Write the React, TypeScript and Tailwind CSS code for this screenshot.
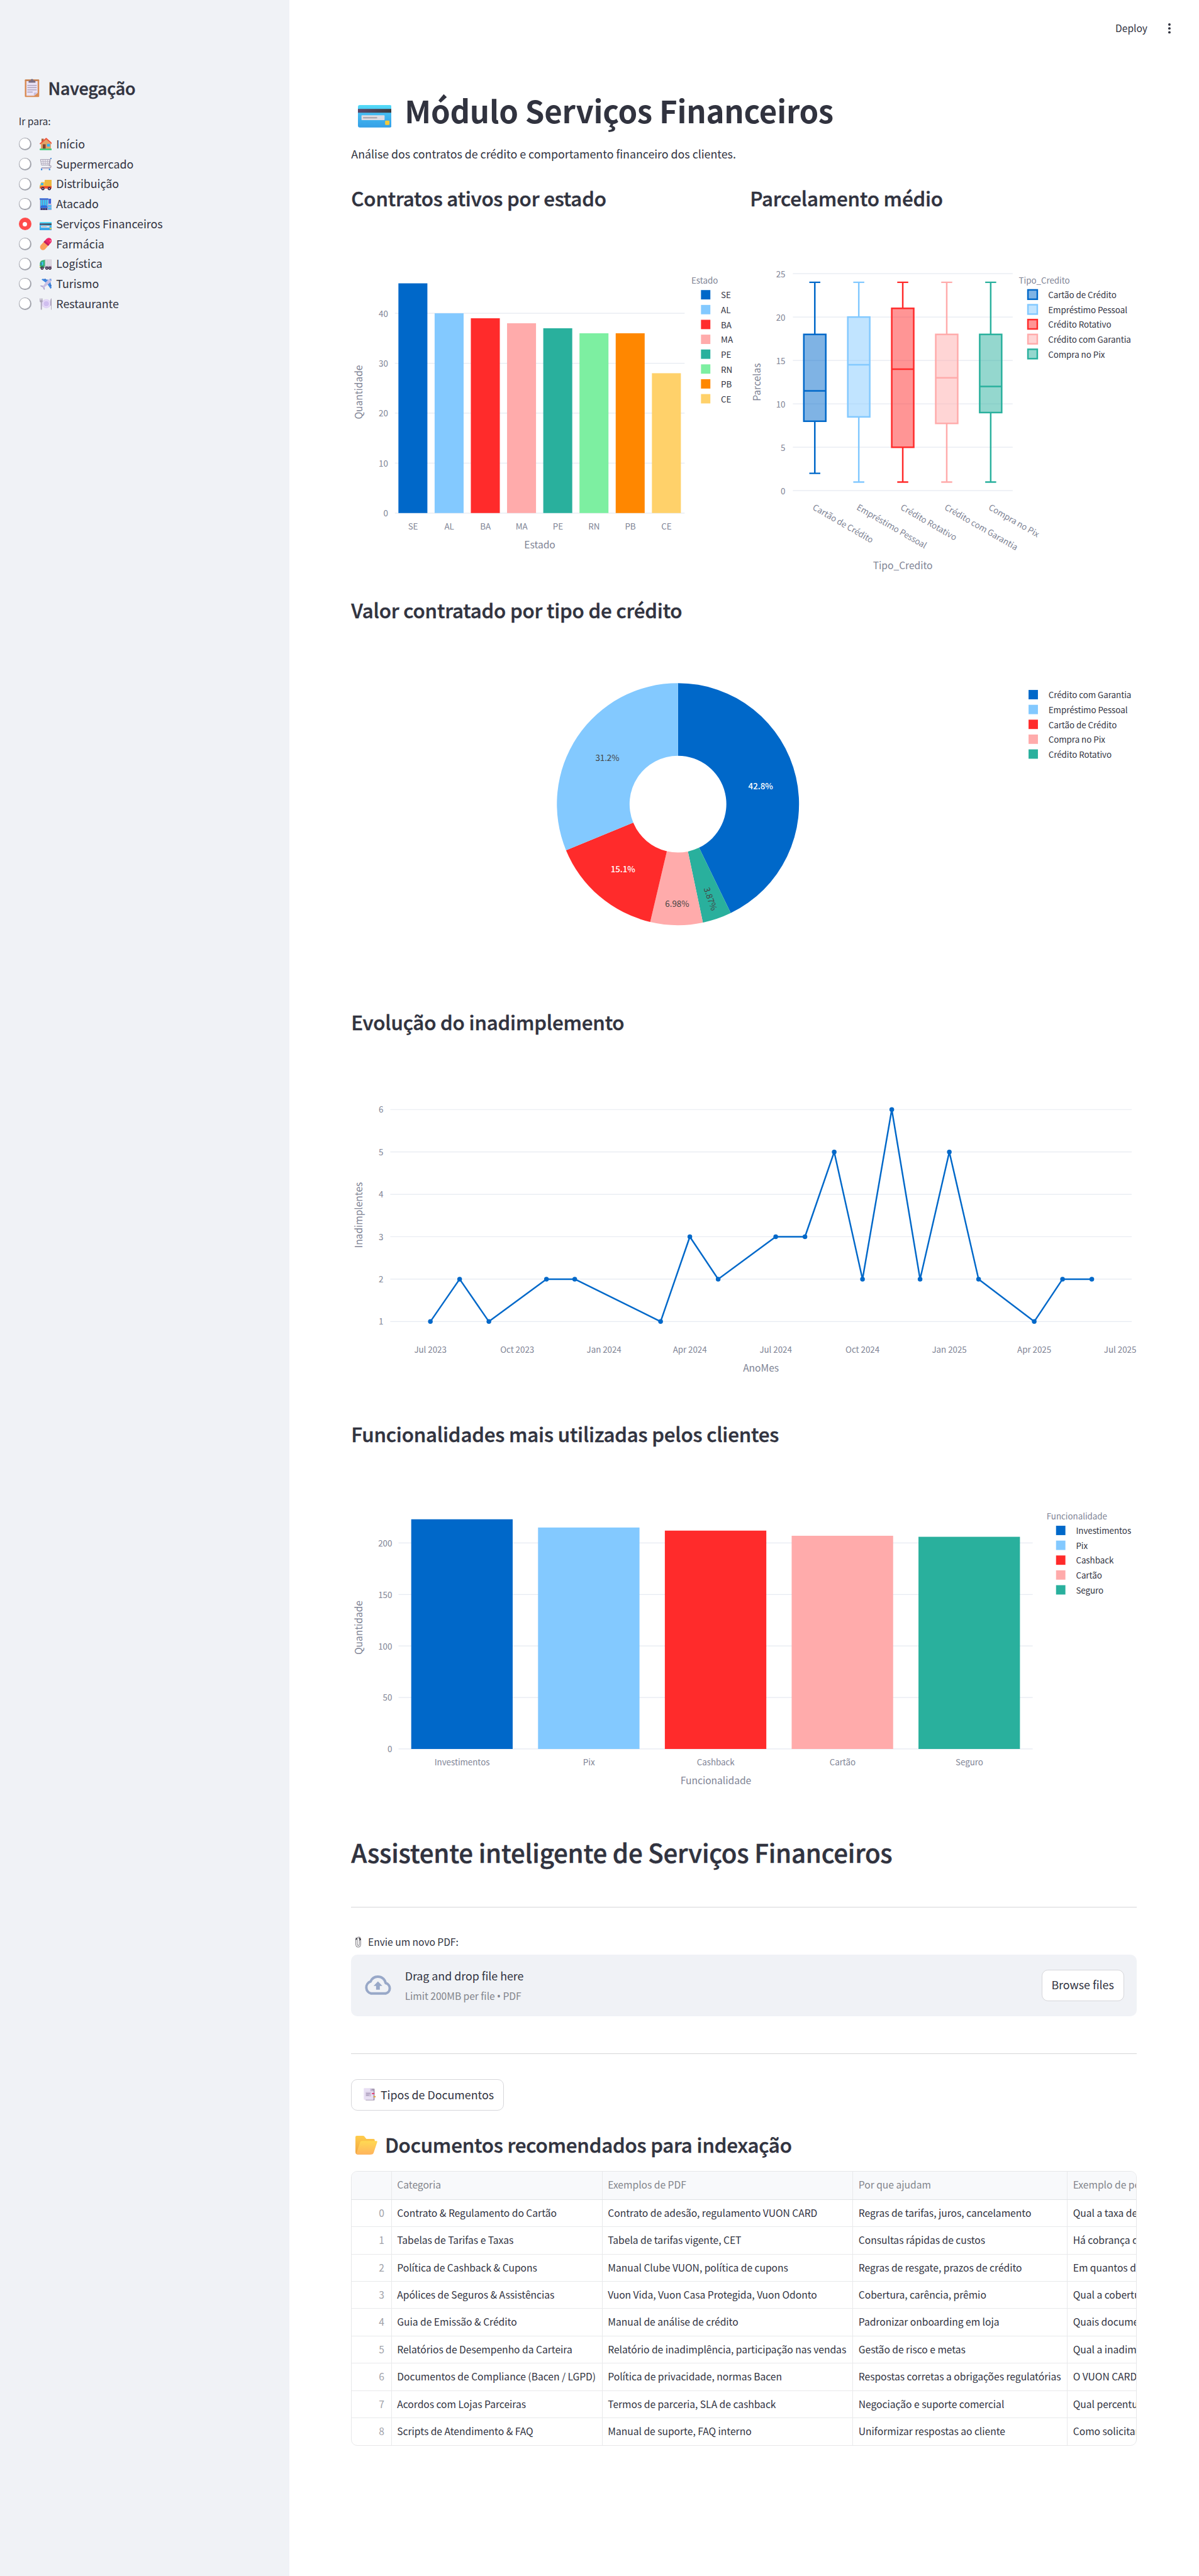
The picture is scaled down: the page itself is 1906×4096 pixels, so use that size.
import React from "react";

const C = {
  blue: "#0068c9",
  sky: "#83c9ff",
  red: "#ff2b2b",
  pink: "#ffabab",
  teal: "#29b09d",
  green: "#7defa1",
  orange: "#ff8700",
  yellow: "#ffd16a",
};

type IconProps = { className?: string };

/* ---------- Pictograms ---------- */

const Clipboard = ({ className }: IconProps) => (
  <svg viewBox="0 0 24 30" className={className}>
    <rect x="0.5" y="1.5" width="23" height="28" rx="1.2" fill="#d98c55" />
    <rect x="0.5" y="1.5" width="23" height="2" rx="1" fill="#c4804f" />
    <path d="M3 4h18v19l-5.500 4.500H3z" fill="#e9e2f5" />
    <path d="M21 22.500l-6 5v-3.500q0-1.500 1.500-1.500z" fill="#c9bcdc" />
    <path d="M6.500 6.500v-2q0-1.500 2-1.500h1.200q.3-2.500 2.300-2.500t2.300 2.500h1.200q2 0 2 1.500v2z" fill="#7b6f82" />
    <path d="M4.500 11h15M4.500 14.500h15M4.500 18h15M4.500 21.500h8.500" stroke="#a69bb5" strokeWidth="1.200" />
  </svg>
);

const House = ({ className }: IconProps) => (
  <svg viewBox="0 0 20 20" className={className}>
    <rect x="3" y="1.500" width="3.600" height="7" fill="#a9683f" />
    <path d="M2 9.500L10.500 2 18 9.500V18H2z" fill="#e3a468" />
    <path d="M1 9.500L10.500 1.300 19.500 9.500" fill="none" stroke="#f2553c" strokeWidth="1.900" strokeLinecap="round" strokeLinejoin="round" />
    <rect x="5" y="10.500" width="4.600" height="7.500" fill="#7d4633" />
    <rect x="11.800" y="9.800" width="4.800" height="4.300" fill="#2fb5ff" />
    <rect x="0" y="17.500" width="20" height="2.300" rx="1" fill="#3ecb77" />
  </svg>
);

const Cart = ({ className }: IconProps) => (
  <svg viewBox="0 0 20 20" className={className}>
    <path d="M1.300 2.500h15l-1.500 9.300H3z" fill="#eeecf3" stroke="#a7a2b3" strokeWidth="1" />
    <path d="M1.800 5.500h14M2.300 8.700h13M5.200 2.500l.8 9M9 2.500v9M12.800 2.500l-.6 9" stroke="#b3aebf" strokeWidth="0.900" />
    <path d="M19.500 1h-2l-2.200 12.500M15.500 12.200q2.800 0 2.800 1.700t-2.300 1.800H3" fill="none" stroke="#a49db3" strokeWidth="1.200" />
    <path d="M17.200 1h2.800" stroke="#3b8be0" strokeWidth="1.500" />
    <path d="M2 17.200h15" stroke="#bdb4cd" strokeWidth="1.200" />
    <rect x="2" y="17.200" width="2.200" height="2.600" fill="#3b8be0" />
    <rect x="14.800" y="17.200" width="2.200" height="2.600" fill="#3b8be0" />
  </svg>
);

const Truck = ({ className }: IconProps) => (
  <svg viewBox="0 0 20 20" className={className}>
    <rect x="8" y="3" width="11.800" height="11" rx="1.200" fill="#edb83f" />
    <path d="M0.300 12l1.600-4.300q.5-1.200 1.700-1.200H8V16H0.300z" fill="#ffc043" />
    <path d="M1.400 11.200l1.300-3.300H6v3.800H1.400z" fill="#35b6f5" />
    <path d="M0.300 13h19.500v4H0.300z" fill="#f2502f" />
    <rect x="0.200" y="12.200" width="1.600" height="2" fill="#a5e23b" />
    <circle cx="5.200" cy="17" r="2.600" fill="#3b2848" />
    <circle cx="5.200" cy="17" r="1" fill="#cfc6dc" />
    <circle cx="15.500" cy="17" r="2.600" fill="#3b2848" />
    <circle cx="15.500" cy="17" r="1" fill="#cfc6dc" />
  </svg>
);

const Store = ({ className }: IconProps) => (
  <svg viewBox="0 0 20 20" className={className}>
    <rect x="0.700" y="1" width="13" height="19" fill="#7a80b8" />
    <rect x="0" y="0.300" width="14" height="2.200" fill="#3668d6" />
    <path d="M2.700 3v9M6 3v9M9 3v9M12 3v9" stroke="#35cdfb" strokeWidth="2" />
    <rect x="14.300" y="1" width="4" height="8" fill="#3d5fd8" />
    <rect x="12.500" y="9.800" width="7.200" height="10" fill="#b5a9d6" />
    <rect x="13.300" y="11.500" width="5.600" height="2.500" fill="#43c4f7" />
    <rect x="13.300" y="15.500" width="5.600" height="2.500" fill="#43c4f7" />
    <path d="M1 15.500q1-4 3-4h6q2 0 2.700 4z" fill="#2a6fe0" />
    <path d="M3.500 16v4M7 16v4M10.500 16v4" stroke="#352b58" strokeWidth="2.300" />
  </svg>
);

const Card = ({ className }: IconProps) => (
  <svg viewBox="0 0 54 36" className={className}>
    <defs>
      <linearGradient id="cardBody" x1="0" y1="0" x2="0" y2="1">
        <stop offset="0" stopColor="#55dcf7" />
        <stop offset="0.350" stopColor="#45bdf2" />
        <stop offset="1" stopColor="#359fe6" />
      </linearGradient>
      <linearGradient id="cardStripe" x1="0" y1="0" x2="1" y2="0">
        <stop offset="0" stopColor="#5b4769" />
        <stop offset="1" stopColor="#3b3b3d" />
      </linearGradient>
    </defs>
    <rect width="54" height="36" rx="3" fill="url(#cardBody)" />
    <rect y="6.300" width="54" height="6" fill="url(#cardStripe)" />
    <rect x="5.700" y="16.300" width="37" height="8" rx="1.200" fill="#dedce2" />
    <rect x="8" y="19.500" width="23" height="2" rx="1" fill="#a5a1a8" />
    <rect x="43.500" y="25" width="7" height="7" rx="1.500" fill="#f4c93c" />
  </svg>
);

const Pill = ({ className }: IconProps) => (
  <svg viewBox="0 0 20 20" className={className}>
    <g transform="rotate(-48 10 10)">
      <path d="M10 5.200H3.200a4.800 4.800 0 0 0 0 9.600H10z" fill="#fca05c" />
      <path d="M10 5.200h6.800a4.800 4.800 0 0 1 0 9.600H10z" fill="#ed2866" />
      <path d="M10 5.200h3v9.600h-3z" fill="#c11f5c" />
    </g>
    <circle cx="17" cy="5" r="1" fill="#ff9ec2" />
  </svg>
);

const Lorry = ({ className }: IconProps) => (
  <svg viewBox="0 0 20 20" className={className}>
    <rect x="8" y="2.500" width="12" height="12.500" fill="#d5ced9" />
    <path d="M10.500 3v11.500M13.500 3v11.500M16.500 3v11.500" stroke="#efebf2" strokeWidth="1" />
    <path d="M0.300 16V9q.7-5 4.700-5.300L8.500 3v13z" fill="#37b277" />
    <path d="M1.200 11.500q0-5 3.300-5.300h1.200v5.300z" fill="#3cc5f0" />
    <path d="M2.300 7.500v4" stroke="#2c4d58" strokeWidth="1.200" />
    <rect x="0.300" y="13" width="19.500" height="3" fill="#b4a9bf" />
    <rect x="0.300" y="12.500" width="7" height="3.500" fill="#2f9e69" />
    <rect x="0" y="13" width="1.300" height="2" fill="#ffd447" />
    <rect x="18.800" y="13" width="1.200" height="2.400" fill="#e43b6b" />
    {[4, 11.5, 16.5].map((x) => (
      <g key={x}>
        <circle cx={x} cy="16.600" r="2.500" fill="#35223f" />
        <circle cx={x} cy="16.600" r="0.900" fill="#d6cbe2" />
      </g>
    ))}
  </svg>
);

const Plane = ({ className }: IconProps) => (
  <svg viewBox="0 0 20 20" className={className}>
    <path d="M3 2.500l2-1.300L14.500 3 10 7.500z" fill="#3f86e0" />
    <path d="M17.300 6l1.800 9.500-1.500 2L12.500 10z" fill="#3f86e0" />
    <path d="M0.500 12.500l1.700-.7 4 .8 1.300 1.200.8 4.200-1 1.500-2.300-4.500z" fill="#b1a7d0" />
    <path d="M4.500 14.500Q12 3.500 15.500 1.600q3-1.800 4 0 .6 1.800-1.200 4Q14.500 10 6 16z" fill="#c9bfe2" />
    <path d="M16.500 1.700q1.300.8 2 2.200" stroke="#4a9cf0" strokeWidth="1.200" fill="none" />
    <rect x="8" y="1" width="1.500" height="2" fill="#2f65bb" />
    <rect x="17" y="11" width="2" height="1.500" fill="#2f65bb" />
  </svg>
);

const Plate = ({ className }: IconProps) => (
  <svg viewBox="0 0 20 20" className={className}>
    <circle cx="10.700" cy="10" r="7.300" fill="#e0d2f5" />
    <circle cx="10.700" cy="10" r="4.800" fill="#d0beef" stroke="#eee5fb" strokeWidth="0.900" />
    <path d="M0.200 1.500h1v3h.8v-3h1v3h.8v-3h1v4.700q0 1.300-1.200 1.600V19q0 .8-.9.800t-.9-.8V7.800Q.2 7.500.2 6.200z" fill="#aaa2b7" />
    <path d="M17.200 5q.2-3 1.800-3.700h.9V19q0 .8-.8.800t-.8-.8v-6h-1.100z" fill="#aaa2b7" />
  </svg>
);

const Clips = ({ className }: IconProps) => (
  <svg viewBox="0 0 12 18" className={className} fill="none" stroke="#8c8a90">
    <path d="M1.500 6v6q0 5 4 5t4-5V5q0-4-3-4T4 4.500V12q0 2.500 1.700 2.500T7.300 12V6" strokeWidth="1.100" />
    <path d="M1.200 5.500l2-1.500M1.500 3h2.200M6.500 2.500l3 2.500M7.200 5.800l2-.8" stroke="#37343c" strokeWidth="1.600" />
  </svg>
);

const Docs = ({ className }: IconProps) => (
  <svg viewBox="0 0 20 20" className={className}>
    <rect x="3" y="1" width="14.700" height="19" rx="1" fill="#a79bb3" />
    <path d="M0.300 0.800q0-.5.500-.5H11l4.700 5V18q0 .8-.8.800H1.100q-.8 0-.8-.8z" fill="#e8dff3" />
    <path d="M10.800.3v4q0 1 1 1h3.900z" fill="#c4b6d4" />
    <rect x="3.300" y="6.500" width="8.700" height="7" fill="#cfc3dc" />
    <path d="M4 9h6.500M4 11.500h4.500" stroke="#9f93b1" strokeWidth="1" />
    <rect x="13.300" y="8" width="4" height="2" fill="#e23a72" />
    <rect x="15.800" y="13" width="3.500" height="2" fill="#e2a53c" />
  </svg>
);

const Folder = ({ className }: IconProps) => (
  <svg viewBox="0 0 35 30" className={className}>
    <defs>
      <linearGradient id="folderBack" x1="0" y1="0" x2="0" y2="1">
        <stop offset="0" stopColor="#ffcd4d" />
        <stop offset="1" stopColor="#f0a23f" />
      </linearGradient>
      <linearGradient id="folderFront" x1="0" y1="0" x2="0" y2="1">
        <stop offset="0" stopColor="#ffd953" />
        <stop offset="1" stopColor="#ffb45d" />
      </linearGradient>
    </defs>
    <path d="M0 2q0-2 2-2h10q1.500 0 2.500 1.300L17.500 5H29q2 0 2 2v10L24 30H4q-4 0-4-4z" fill="url(#folderBack)" />
    <path d="M10 8.300h23.500q2 0 1.300 2L29.300 27q-.9 3-4 3H4q-3 0-2-3L7.500 10.300q.7-2 2.500-2z" fill="url(#folderFront)" />
  </svg>
);

const CloudUpload = ({ className }: IconProps) => (
  <svg viewBox="0 0 46 31" className={className}>
    <path
      d="M12 29a10 10 0 0 1-.8-19.200C13.200 5 17.600 2 22.800 2c6.300 0 11.300 4.200 12.500 10.300A8.600 8.600 0 0 1 35.400 29z"
      fill="none"
      stroke="#98a8c8"
      strokeWidth="4"
      strokeLinejoin="round"
    />
    <path d="M23 9.500l7 7.500h-4v6h-6v-6h-4z" fill="#98a8c8" />
  </svg>
);

/* ---------- Chart helpers ---------- */

const Grid = ({ x1, x2, ys }: { x1: number; x2: number; ys: number[] }) => (
  <g stroke="#e6eaf1" strokeWidth="1.250">
    {ys.map((y) => (
      <line key={y} x1={x1} x2={x2} y1={y} y2={y} />
    ))}
  </g>
);

type LabelProps = {
  x: number;
  y: number;
  anchor?: "start" | "middle" | "end";
  rotate?: number;
  className?: string;
  children: React.ReactNode;
};

const Label = ({ x, y, anchor = "start", rotate, className = "fill-[#808495] text-[13.5px]", children }: LabelProps) => (
  <text x={x} y={y} textAnchor={anchor} className={className} transform={rotate ? `rotate(${rotate} ${x} ${y})` : undefined}>
    {children}
  </text>
);

const axisTitle = "fill-[#808495] text-[15.75px]";
const legendText = "fill-[#31333f] text-[13.5px]";

type LegendProps = {
  title?: string;
  titleX?: number;
  titleY?: number;
  x: number;
  y: number;
  textX: number;
  items: [string, string][];
  outlined?: boolean;
};

const Legend = ({ title, titleX = 0, titleY = 0, x, y, textX, items, outlined }: LegendProps) => (
  <g>
    {title && (
      <Label x={titleX} y={titleY}>
        {title}
      </Label>
    )}
    {items.map(([name, color], i) => (
      <g key={name}>
        <rect
          x={x}
          y={y + i * 23.8}
          width="15"
          height="15"
          fill={color}
          fillOpacity={outlined ? 0.5 : 1}
          stroke={outlined ? color : "none"}
          strokeWidth="2.500"
        />
        <Label x={textX} y={y + 13.3 + i * 23.8} className={legendText}>
          {name}
        </Label>
      </g>
    ))}
  </g>
);

/* ---------- Charts ---------- */

const states: [string, number, string][] = [
  ["SE", 46, C.blue],
  ["AL", 40, C.sky],
  ["BA", 39, C.red],
  ["MA", 38, C.pink],
  ["PE", 37, C.teal],
  ["RN", 36, C.green],
  ["PB", 36, C.orange],
  ["CE", 28, C.yellow],
];

const StatesChart = () => (
  <svg viewBox="562.5 360 618.75 562.5" className="h-[562.5px] w-[618.75px] overflow-visible">
    <Grid x1={632.8} x2={1096.8} ys={[0, 10, 20, 30, 40].map((v) => 822.2 - v * 8)} />
    {[0, 10, 20, 30, 40].map((v) => (
      <Label key={v} x={621.8} y={827.7 - v * 8} anchor="end">
        {v}
      </Label>
    ))}
    {states.map(([name, v, color], i) => (
      <g key={name}>
        <rect x={638.4 + i * 58} y={822.2 - v * 8} width="46.400" height={v * 8} fill={color} />
        <Label x={661.8 + i * 58} y={849} anchor="middle">
          {name}
        </Label>
      </g>
    ))}
    <Label x={864.8} y={878.6} anchor="middle" className={axisTitle}>
      Estado
    </Label>
    <Label x={580.4} y={628.5} anchor="middle" rotate={-90} className={axisTitle}>
      Quantidade
    </Label>
    <Legend title="Estado" titleX={1107.5} titleY={455} x={1123} y={465} textX={1155} items={states.map(([n, , c]) => [n, c])} />
  </svg>
);

const boxes: [string, string, number[]][] = [
  ["Cartão de Crédito", C.blue, [2, 8, 11.5, 18, 24]],
  ["Empréstimo Pessoal", C.sky, [1, 8.5, 14.5, 20, 24]],
  ["Crédito Rotativo", C.red, [1, 5, 14, 21, 24]],
  ["Crédito com Garantia", C.pink, [1, 7.75, 13, 18, 24]],
  ["Compra no Pix", C.teal, [1, 9, 12, 18, 24]],
];

const BoxChart = () => {
  const y = (v: number) => 786.4 - v * 13.91;
  return (
    <svg viewBox="1201.25 360 618.75 562.5" className="h-[562.5px] w-[618.75px] overflow-visible">
      <Grid x1={1270.1} x2={1622.2} ys={[0, 5, 10, 15, 20, 25].map(y)} />
      {[0, 5, 10, 15, 20, 25].map((v) => (
        <Label key={v} x={1258.2} y={y(v) + 5.5} anchor="end">
          {v}
        </Label>
      ))}
      {boxes.map(([name, color, [lo, q1, med, q3, hi]], i) => {
        const cx = 1305.3 + i * 70.42;
        return (
          <g key={name}>
            <g stroke={color} strokeWidth="2.500">
              <rect x={cx - 17.6} y={y(q3)} width="35.200" height={y(q1) - y(q3)} fill={color} fillOpacity="0.500" />
              <path
                d={`M${cx - 17.6} ${y(med)}h35.2M${cx} ${y(q3)}V${y(hi)}M${cx} ${y(q1)}V${y(lo)}M${cx - 8.8} ${y(hi)}h17.6M${cx - 8.8} ${y(lo)}h17.6`}
                fill="none"
              />
            </g>
            <Label x={cx - 4.5} y={816} rotate={30}>
              {name}
            </Label>
          </g>
        );
      })}
      <Label x={1446.2} y={912.4} anchor="middle" className={axisTitle}>
        Tipo_Credito
      </Label>
      <Label x={1218.2} y={612.5} anchor="middle" rotate={-90} className={axisTitle}>
        Parcelas
      </Label>
      <Legend
        title="Tipo_Credito"
        titleX={1632}
        titleY={455}
        x={1646.6}
        y={464.7}
        textX={1679}
        outlined
        items={boxes.map(([n, c]) => [n, c])}
      />
    </svg>
  );
};

const slices: [number, string][] = [
  [42.82, C.blue],
  [3.88, C.teal],
  [6.98, C.pink],
  [15.1, C.red],
  [31.22, C.sky],
];

const DonutChart = () => {
  const cx = 1086.1;
  const cy = 1288.6;
  const R = 193.9;
  const r = 77.5;
  const pt = (rad: number, f: number) =>
    `${cx + rad * Math.sin(f * 2 * Math.PI)} ${cy - rad * Math.cos(f * 2 * Math.PI)}`;
  let start = 0;
  return (
    <svg viewBox="562.5 1020 1257.5 562.5" className="h-[562.5px] w-full overflow-visible">
      {slices.map(([pct, color]) => {
        const a = start;
        const b = start + pct / 100;
        start = b;
        return (
          <path
            key={color}
            fill={color}
            d={`M${pt(R, a)}A${R} ${R} 0 0 1 ${pt(R, b)}L${pt(r, b)}A${r} ${r} 0 0 0 ${pt(r, a)}z`}
          />
        );
      })}
      <Label x={1218.6} y={1264.5} anchor="middle" className="fill-white text-[13.5px] font-medium">
        42.8%
      </Label>
      <Label x={998} y={1398} anchor="middle" className="fill-white text-[13.5px] font-medium">
        15.1%
      </Label>
      <Label x={973} y={1219.4} anchor="middle" className="fill-[#444444] text-[13.5px]">
        31.2%
      </Label>
      <Label x={1084.8} y={1453.2} anchor="middle" className="fill-[#444444] text-[13.5px]">
        6.98%
      </Label>
      <Label x={1133.4} y={1442} anchor="middle" rotate={71} className="fill-[#444444] text-[13.5px]">
        3.87%
      </Label>
      <Legend
        x={1647.6}
        y={1105.7}
        textX={1679.5}
        items={[
          ["Crédito com Garantia", C.blue],
          ["Empréstimo Pessoal", C.sky],
          ["Cartão de Crédito", C.red],
          ["Compra no Pix", C.pink],
          ["Crédito Rotativo", C.teal],
        ]}
      />
    </svg>
  );
};

/* [days since 1 Jul 2023, customers in default] */
const defaults: [number, number][] = [
  [0, 1], [31, 2], [62, 1], [123, 2], [153, 2], [244, 1], [275, 3], [305, 2], [366, 3], [397, 3],
  [428, 5], [458, 2], [489, 6], [519, 2], [550, 5], [581, 2], [640, 1], [670, 2], [701, 2],
];

const quarters: [number, string][] = [
  [0, "Jul 2023"], [92, "Oct 2023"], [184, "Jan 2024"], [275, "Apr 2024"], [366, "Jul 2024"],
  [458, "Oct 2024"], [550, "Jan 2025"], [640, "Apr 2025"], [731, "Jul 2025"],
];

const DefaultsChart = () => {
  const x = (d: number) => 689.6 + d * 1.5111;
  const y = (v: number) => 2185.5 - v * 67.92;
  return (
    <svg viewBox="562.5 1680 1257.5 562.5" className="h-[562.5px] w-full overflow-visible">
      <Grid x1={625.4} x2={1812.7} ys={[1, 2, 3, 4, 5, 6].map(y)} />
      {[1, 2, 3, 4, 5, 6].map((v) => (
        <Label key={v} x={614.3} y={y(v) + 5.2} anchor="end">
          {v}
        </Label>
      ))}
      {quarters.map(([d, name]) => (
        <Label key={name} x={x(d)} y={2167.8} anchor="middle">
          {name}
        </Label>
      ))}
      <polyline
        points={defaults.map(([d, v]) => `${x(d)},${y(v)}`).join(" ")}
        fill="none"
        stroke={C.blue}
        strokeWidth="2.500"
        strokeLinejoin="round"
      />
      {defaults.map(([d, v]) => (
        <circle key={d} cx={x(d)} cy={y(v)} r="3.750" fill={C.blue} />
      ))}
      <Label x={1219} y={2198} anchor="middle" className={axisTitle}>
        AnoMes
      </Label>
      <Label x={580.4} y={1947} anchor="middle" rotate={-90} className={axisTitle}>
        Inadimplentes
      </Label>
    </svg>
  );
};

const features: [string, number, string][] = [
  ["Investimentos", 223, C.blue],
  ["Pix", 215, C.sky],
  ["Cashback", 212, C.red],
  ["Cartão", 207, C.pink],
  ["Seguro", 206, C.teal],
];

const FeaturesChart = () => {
  const y = (v: number) => 2801.4 - v * 1.65;
  return (
    <svg viewBox="562.5 2340 1257.5 562.5" className="h-[562.5px] w-full overflow-visible">
      <Grid x1={638.6} x2={1654.2} ys={[0, 50, 100, 150, 200].map(y)} />
      {[0, 50, 100, 150, 200].map((v) => (
        <Label key={v} x={628.3} y={y(v) + 5.4} anchor="end">
          {v}
        </Label>
      ))}
      {features.map(([name, v, color], i) => (
        <g key={name}>
          <rect x={658.9 + i * 203.1} y={y(v)} width="162.500" height={v * 1.65} fill={color} />
          <Label x={740.4 + i * 203.1} y={2827.8} anchor="middle">
            {name}
          </Label>
        </g>
      ))}
      <Label x={1146.8} y={2858} anchor="middle" className={axisTitle}>
        Funcionalidade
      </Label>
      <Label x={580.4} y={2607} anchor="middle" rotate={-90} className={axisTitle}>
        Quantidade
      </Label>
      <Legend
        title="Funcionalidade"
        titleX={1676.5}
        titleY={2433.5}
        x={1691.6}
        y={2443.8}
        textX={1723.5}
        items={features.map(([n, , c]) => [n, c])}
      />
    </svg>
  );
};

/* ---------- Page ---------- */

const nav: [string, (p: IconProps) => React.JSX.Element][] = [
  ["Início", House],
  ["Supermercado", Cart],
  ["Distribuição", Truck],
  ["Atacado", Store],
  ["Serviços Financeiros", Card],
  ["Farmácia", Pill],
  ["Logística", Lorry],
  ["Turismo", Plane],
  ["Restaurante", Plate],
];

/* Medium weight thickened slightly to read as semibold */
const semibold = "font-medium tracking-[-0.005em] [-webkit-text-stroke:0.5px_currentColor]";

const Sidebar = () => (
  <aside className="w-[463px] shrink-0 bg-[#f0f2f6] pl-[30px] pt-[123px]">
    <h2 className={`flex h-9 items-center pl-[9px] text-[27px] leading-9 ${semibold}`}>
      <Clipboard className="mr-[14px] h-[30px] w-6" />
      Navegação
    </h2>
    <p className="mt-[22px] text-[15.75px] leading-[26px]">Ir para:</p>
    <ul className="mt-2">
      {nav.map(([name, Icon]) => (
        <li key={name} className="flex h-8 items-center">
          {name === "Serviços Financeiros" ? (
            <span className="flex size-5 items-center justify-center rounded-full bg-[#ff4b4b]">
              <span className="size-[7.5px] rounded-full bg-white" />
            </span>
          ) : (
            <span className="flex size-5 rounded-full bg-[#a3a5ad] pb-[2px] pl-px pr-[1.5px] pt-px">
              <span className="grow rounded-full bg-white" />
            </span>
          )}
          <Icon className={name === "Serviços Financeiros" ? "ml-[13px] mt-[6px] h-[13.5px] w-5" : "ml-[13px] size-5"} />
          <span className="ml-[7px] pb-px text-[18px] leading-6">{name}</span>
        </li>
      ))}
    </ul>
  </aside>
);

const columns = ["", "Categoria", "Exemplos de PDF", "Por que ajudam", "Exemplo de pergunta"];

const rows = [
  ["Contrato & Regulamento do Cartão", "Contrato de adesão, regulamento VUON CARD", "Regras de tarifas, juros, cancelamento", "Qual a taxa de juros"],
  ["Tabelas de Tarifas e Taxas", "Tabela de tarifas vigente, CET", "Consultas rápidas de custos", "Há cobrança de"],
  ["Política de Cashback & Cupons", "Manual Clube VUON, política de cupons", "Regras de resgate, prazos de crédito", "Em quantos dias"],
  ["Apólices de Seguros & Assistências", "Vuon Vida, Vuon Casa Protegida, Vuon Odonto", "Cobertura, carência, prêmio", "Qual a cobertura"],
  ["Guia de Emissão & Crédito", "Manual de análise de crédito", "Padronizar onboarding em loja", "Quais documentos"],
  ["Relatórios de Desempenho da Carteira", "Relatório de inadimplência, participação nas vendas", "Gestão de risco e metas", "Qual a inadimplência"],
  ["Documentos de Compliance (Bacen / LGPD)", "Política de privacidade, normas Bacen", "Respostas corretas a obrigações regulatórias", "O VUON CARD"],
  ["Acordos com Lojas Parceiras", "Termos de parceria, SLA de cashback", "Negociação e suporte comercial", "Qual percentual"],
  ["Scripts de Atendimento & FAQ", "Manual de suporte, FAQ interno", "Uniformizar respostas ao cliente", "Como solicitar"],
];

const gridCols = "grid grid-cols-[64px_337.5px_401.5px_343.5px_110.5px]";
const cell = "overflow-hidden whitespace-nowrap border-r border-[#e8e9eb] pl-[8.5px]";
const lastCell = "overflow-hidden whitespace-nowrap pl-[8.5px]";

const DocsTable = () => (
  <div className="mt-[22px] h-[440px] overflow-hidden rounded-[10px] border border-[#e6e7e9] text-[15.75px] leading-[43px] tracking-[-0.001em]">
    <div className={`${gridCols} h-[45px] border-b border-[#e0e2e5] bg-[#f8f9fb] text-[#83858c]`}>
      {columns.map((c, i) => (
        <div key={c} className={i === 4 ? lastCell : cell}>
          {c}
        </div>
      ))}
    </div>
    {rows.map((r, i) => (
      <div key={r[0]} className={`${gridCols} h-[43.75px] border-b border-[#e8e9eb]`}>
        <div className="border-r border-[#e8e9eb] pr-[11px] text-right text-[#a0a2a9]">{i}</div>
        {r.map((t, j) => (
          <div key={t} className={j === 3 ? lastCell : cell}>
            {t}
          </div>
        ))}
      </div>
    ))}
  </div>
);

const h3 = `text-[31.5px] leading-[42px] ${semibold}`;

const Main = () => (
  <main className="w-[1457px] pl-[99.5px]">
    <header className="flex h-[88px] items-center justify-end pr-[44.5px] text-[15.75px]">
      <span className="pt-[2px]">Deploy</span>
      <svg viewBox="0 0 6 18" className="ml-[32px] mt-[3px] h-[18px] w-[6px] fill-[#31333f]">
        <circle cx="3" cy="3" r="2" />
        <circle cx="3" cy="9.200" r="2" />
        <circle cx="3" cy="15.500" r="2" />
      </svg>
    </header>
    <div className="w-[1257.5px]">
      <h1 className="mt-[55px] flex h-[66px] items-center text-[49.5px] font-bold leading-[66px] tracking-[-0.004em]">
        <Card className="ml-[10.5px] mr-[21px] mt-[21px] h-9 w-[54px]" />
        Módulo Serviços Financeiros
      </h1>
      <p className="mt-[23px] text-[18px] leading-[30px]">
        Análise dos contratos de crédito e comportamento financeiro dos clientes.
      </p>
      <div className="mt-[34px] flex gap-5">
        <section className="w-[618.75px]">
          <h3 className={`${h3} mb-[22px]`}>Contratos ativos por estado</h3>
          <StatesChart />
        </section>
        <section className="w-[618.75px]">
          <h3 className={`${h3} mb-[22px]`}>Parcelamento médio</h3>
          <BoxChart />
        </section>
      </div>
      <h3 className={`${h3} mb-[22px] mt-[33.5px]`}>Valor contratado por tipo de crédito</h3>
      <DonutChart />
      <h3 className={`${h3} mb-[22px] mt-[33.5px]`}>Evolução do inadimplemento</h3>
      <DefaultsChart />
      <h3 className={`${h3} mb-[22px] mt-[33.5px]`}>Funcionalidades mais utilizadas pelos clientes</h3>
      <FeaturesChart />
      <h2 className={`mt-[37px] text-[40.5px] leading-[54px] ${semibold}`}>
        Assistente inteligente de Serviços Financeiros
      </h2>
      <hr className="mt-[61.5px] border-[#d6d6d8]" />
      <p className="mt-[42px] flex h-[26px] items-center text-[15.75px] leading-[26px]">
        <Clips className="ml-[6px] mr-[9px] h-[18px] w-3" />
        Envie um novo PDF:
      </p>
      <div className="mt-[7px] flex h-[99px] items-center rounded-[10px] bg-[#f0f2f6] px-5">
        <CloudUpload className="h-[31px] w-[46px]" />
        <div className="ml-5 grow pt-[3.5px]">
          <p className="text-[18px] leading-[30px]">Drag and drop file here</p>
          <p className="mt-[2.5px] text-[15.75px] leading-[30px] text-[#83858c]">
            Limit 200MB per file <span className="font-['Noto_Sans']">•</span> PDF
          </p>
        </div>
        <button className="h-[50px] rounded-[10px] border border-[#d6d6da] bg-white px-[15px] pb-[2px] text-[18px]">
          Browse files
        </button>
      </div>
      <hr className="mt-[60px] border-[#d6d6d8]" />
      <button className="mt-10 flex h-[50px] items-center rounded-[10px] border border-[#d6d6da] px-[15px] pb-[2px] pl-[19px] text-[18px]">
        <Docs className="mr-[7px] size-5" />
        Tipos de Documentos
      </button>
      <h3 className={`${h3} mt-[33px] flex items-center`}>
        <Folder className="ml-[7px] mr-[12px] mt-1 h-[30px] w-[35px]" />
        Documentos recomendados para indexação
      </h3>
      <DocsTable />
    </div>
  </main>
);

export default function App() {
  return (
    <div className="h-[4096px] w-[1906px] overflow-hidden bg-white">
      <div className="flex h-[4130px] w-[1920px] font-['Noto_Sans_CJK_SC','Noto_Sans',sans-serif] tracking-[-0.0025em] text-[#31333f] [zoom:0.9926]">
        <Sidebar />
        <Main />
      </div>
    </div>
  );
}
